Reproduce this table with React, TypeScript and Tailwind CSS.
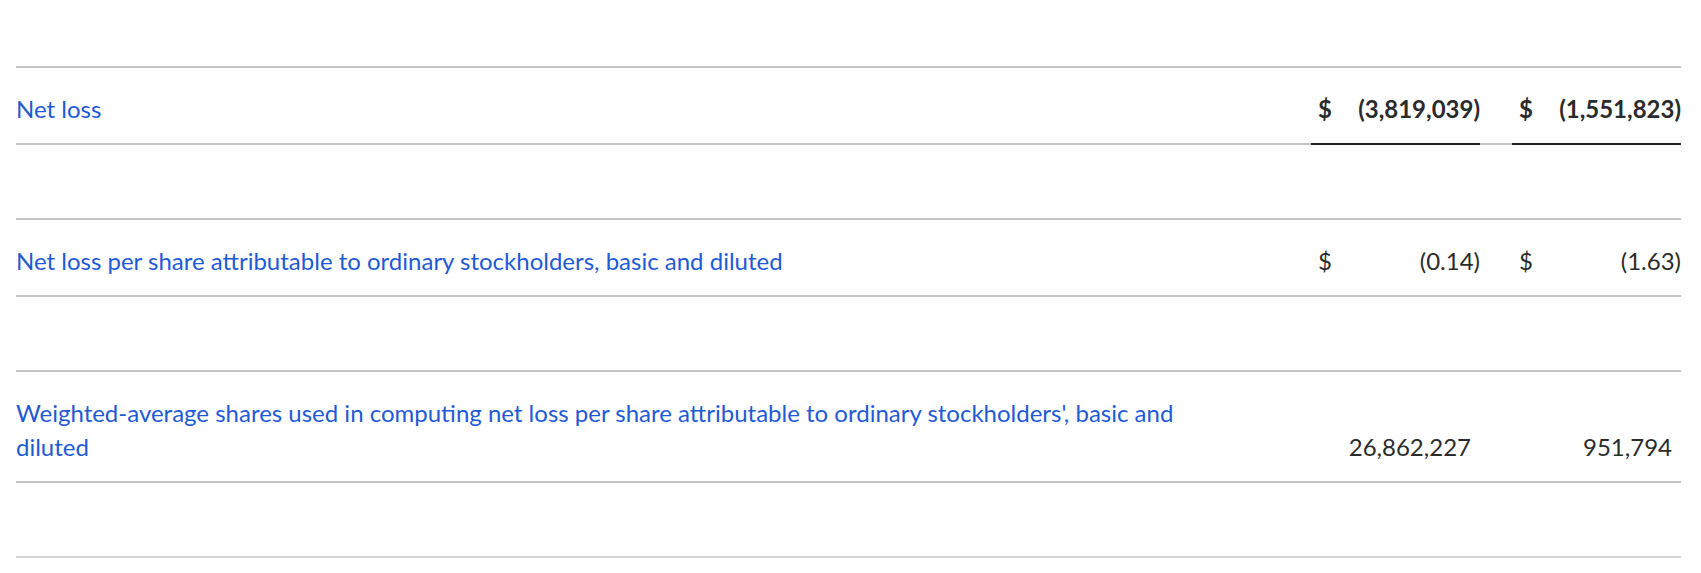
import React from "react";

interface Row {
  label: string;
  v1: string;
  v2: string;
  dollar?: boolean;
  bold?: boolean;
  total?: boolean;
  pad?: boolean;
}

const rows: Row[] = [
  { label: "Net loss", v1: "(3,819,039)", v2: "(1,551,823)", dollar: true, bold: true, total: true },
  {
    label: "Net loss per share attributable to ordinary stockholders, basic and diluted",
    v1: "(0.14)",
    v2: "(1.63)",
    dollar: true,
  },
  {
    label:
      "Weighted-average shares used in computing net loss per share attributable to ordinary stockholders', basic and diluted",
    v1: "26,862,227",
    v2: "951,794",
    pad: true,
  },
];

const ValueCell: React.FC<{ row: Row; value: string }> = ({ row, value }) => (
  <div
    className={`flex w-[169px] items-end pt-6 pb-[17px] leading-[34px] ${
      row.total ? "-mb-[2px] border-b-2 border-[#222222]" : ""
    } ${row.bold ? "font-bold" : ""}`}
  >
    <span className="w-[40px] pl-[7px]">{row.dollar ? "$" : ""}</span>
    <span className={`flex-1 text-right ${row.pad ? "pr-[9px]" : ""}`}>{value}</span>
  </div>
);

export default function App() {
  return (
    <div
      className="min-h-[573px] bg-white pt-[66px] pl-4 pr-5 text-[24px] text-[#2b2b2b]"
      style={{ fontFamily: "Lato, 'Open Sans', sans-serif" }}
    >
      {rows.map((row, i) => (
        <div key={i}>
          <div className="flex border-y-2 border-[#c4c4c4]">
            <div className="flex-1 pt-6 pb-[17px] pr-[110px] leading-[34px] text-[#1f5ad6]">
              {row.label}
            </div>
            <ValueCell row={row} value={row.v1} />
            <div className="w-[32px]" />
            <ValueCell row={row} value={row.v2} />
          </div>
          <div className="h-[73px]" />
        </div>
      ))}
      <div className="border-t-2 border-[#d4d4d4]" />
    </div>
  );
}
